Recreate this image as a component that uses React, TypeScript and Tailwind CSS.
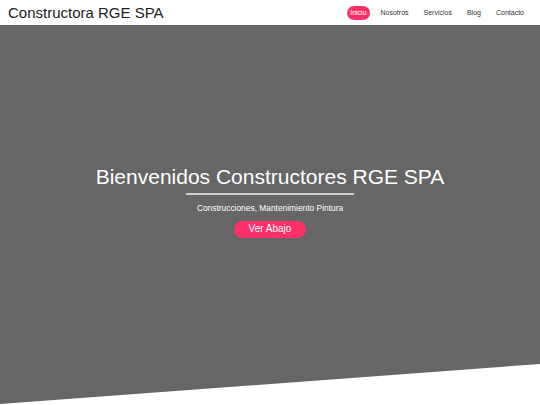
import React from "react";

export default function App() {
  const items = ["Nosotros", "Servicios", "Blog", "Contacto"];
  return (
    <div className="w-[540px] h-[405px] overflow-hidden bg-white flex flex-col" style={{ fontFamily: '"Liberation Sans", Arial, sans-serif' }}>
      <header className="h-[25px] flex items-center justify-between pl-[8px] pr-[16px] bg-white shrink-0">
        <div className="text-[15px] text-[#222] leading-none">Constructora RGE SPA</div>
        <nav className="flex items-center gap-[15px]">
          <span className="text-[7px] leading-none text-white bg-[#ff3068] rounded-full px-[3px] h-[14px] flex items-center mr-[-4px]">Inicio</span>
          {items.map((it) => (
            <span key={it} className="text-[7px] leading-none text-[#333]">
              {it}
            </span>
          ))}
        </nav>
      </header>
      <section
        className="flex-1 bg-[#666666] flex flex-col items-center justify-center pb-[26px]"
        style={{ clipPath: "polygon(0 0, 100% 0, 100% 339px, 0 379px)" }}
      >
        <h1 className="text-[21px] text-white leading-none">Bienvenidos Constructores RGE SPA</h1>
        <div className="w-[168px] h-[2px] bg-[#cfcfcf] mt-[6px]" />
        <p className="text-[8.4px] text-white mt-[9px] leading-none">Construcciones, Mantenimiento Pintura</p>
        <button className="mt-[8px] w-[72px] h-[17px] rounded-full bg-[#ff3068] text-white text-[10px] leading-none">Ver Abajo</button>
      </section>
    </div>
  );
}
